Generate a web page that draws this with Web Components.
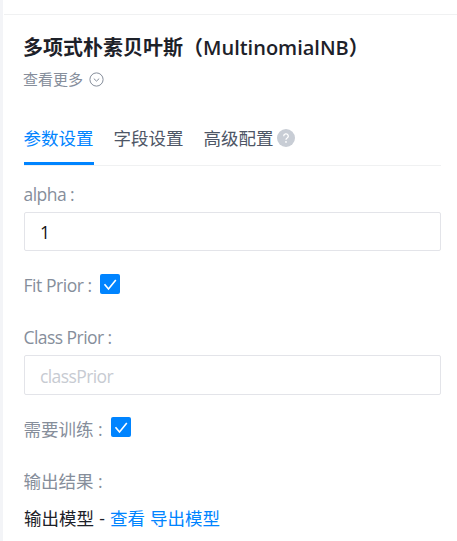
<!DOCTYPE html>
<html lang="zh-CN">
<head>
<meta charset="utf-8">
<title>多项式朴素贝叶斯</title>
<style>
  body {
    margin: 0;
    background: #fff;
    font-family: "Open Sans", "Noto Sans CJK SC", sans-serif;
    font-size: 17.5px;
    --primary: #0084ff;
    --muted: #868e9b;
    --dark: #1d2129;
    --border: #e3e4e9;
  }
</style>
</head>
<body>
<config-panel>
  <panel-title slot="head" more="查看更多">多项式朴素贝叶斯（MultinomialNB）</panel-title>
  <tab-bar slot="head">
    <tab-item active>参数设置</tab-item>
    <tab-item>字段设置</tab-item>
    <tab-item help>高级配置</tab-item>
  </tab-bar>
  <form-label style="height:46px;padding-top:20px;padding-bottom:8px;letter-spacing:-.55px">alpha :</form-label>
  <text-field value="1"></text-field>
  <form-label style="height:67px;letter-spacing:-.45px">Fit Prior :<check-box slot="control"></check-box></form-label>
  <form-label style="height:37px;letter-spacing:-.55px">Class Prior :</form-label>
  <text-field placeholder="classPrior" style="height:40px;letter-spacing:-.6px"></text-field>
  <form-label style="height:66px">需要训练 :<check-box slot="control"></check-box></form-label>
  <form-label style="height:38px">输出结果 :</form-label>
  <model-output name="输出模型"></model-output>
</config-panel>

<script>
class ConfigPanel extends HTMLElement {
  constructor() {
    super()
    this.attachShadow({ mode: 'open' }).innerHTML = `
      <style>
        :host {
          display: block;
          box-sizing: border-box;
          height: 541px;
          overflow: hidden;
          border-left: 3px solid #f3f4f7;
        }
        .top {
          height: 14px;
          margin-left: 1px;
          border-bottom: 1px solid #f0f1f2;
        }
        .content {
          padding: 0 16px 0 21px;
        }
      </style>
      <div class="top"></div>
      <div class="content">
        <slot name="head"></slot>
        <slot></slot>
      </div>
    `
  }
}
customElements.define('config-panel', ConfigPanel)

class PanelTitle extends HTMLElement {
  constructor() {
    super()
    this.attachShadow({ mode: 'open' })
    this.shadowRoot.innerHTML = `
      <style>
        :host {
          display: block;
          height: 98px;
          padding-top: 17px;
          box-sizing: border-box;
          color: var(--dark);
        }
        h3 {
          margin: 0 0 0 -1px;
          font-size: 20px;
          line-height: 32px;
          font-weight: 600;
          white-space: nowrap;
        }
        .more {
          display: flex;
          align-items: center;
          gap: 6px;
          height: 30px;
          margin-left: -1px;
          font-size: 15px;
          color: var(--muted);
        }
        .more span { margin-top: -2px; }
      </style>
      <h3><slot></slot></h3>
      <div class="more">
        <span>${this.getAttribute('more')}</span>
        <svg width="15" height="15" viewBox="0 0 15 15" fill="none" stroke="currentColor">
          <circle cx="7.5" cy="7.5" r="6.6"/>
          <path d="M4.8 6.6l2.7 2.5 2.7-2.5"/>
        </svg>
      </div>
    `
  }
}
customElements.define('panel-title', PanelTitle)

class TabBar extends HTMLElement {
  constructor() {
    super()
    this.attachShadow({ mode: 'open' }).innerHTML = `
      <style>
        :host {
          display: flex;
          gap: 20px;
          height: 53px;
          box-sizing: border-box;
          border-bottom: 1px solid #f0f1f2;
        }
      </style>
      <slot></slot>
    `
  }
}
customElements.define('tab-bar', TabBar)

class TabItem extends HTMLElement {
  constructor() {
    super()
    const help = this.hasAttribute('help') ? `
      <svg width="18" height="18" viewBox="0 0 18 18">
        <circle cx="9" cy="9" r="9" fill="#c8cdd5"/>
        <path d="M6.7 7.2a2.3 2.2 0 1 1 3.5 1.8c-.8.5-1.2.9-1.2 1.8" fill="none" stroke="#fff" stroke-width="1.3"/>
        <circle cx="9" cy="12.9" r=".9" fill="#fff"/>
      </svg>` : ''
    this.attachShadow({ mode: 'open' }).innerHTML = `
      <style>
        :host {
          display: flex;
          align-items: center;
          gap: 3px;
          height: 52px;
          box-sizing: border-box;
          padding-bottom: 1px;
          border-bottom: 3px solid transparent;
          color: #4e5666;
          white-space: nowrap;
        }
        :host([active]) {
          color: var(--primary);
          border-color: var(--primary);
        }
        span {
          margin-left: -.5px;
          margin-right: .5px;
        }
        svg { margin-top: 1px; }
      </style>
      <span><slot></slot></span>${help}
    `
  }
}
customElements.define('tab-item', TabItem)

class FormLabel extends HTMLElement {
  constructor() {
    super()
    this.attachShadow({ mode: 'open' }).innerHTML = `
      <style>
        :host {
          display: flex;
          align-items: center;
          gap: 8.5px;
          box-sizing: border-box;
          padding-top: 12px;
          padding-bottom: 10px;
          color: var(--muted);
          white-space: nowrap;
        }
        span {
          margin-top: -2px;
          margin-left: -.5px;
        }
      </style>
      <span><slot></slot></span>
      <slot name="control"></slot>
    `
  }
}
customElements.define('form-label', FormLabel)

class CheckBox extends HTMLElement {
  constructor() {
    super()
    this.attachShadow({ mode: 'open' }).innerHTML = `
      <style>
        :host {
          display: block;
          width: 20px;
          height: 20px;
          margin-top: -4px;
          border-radius: 2px;
          background: var(--primary);
        }
        svg { display: block; }
      </style>
      <svg width="20" height="20" viewBox="0 0 20 20">
        <path d="M4.5 10.2l4 4.8L15.8 6" fill="none" stroke="#fff" stroke-width="1.6"/>
      </svg>
    `
  }
}
customElements.define('check-box', CheckBox)

class TextField extends HTMLElement {
  constructor() {
    super()
    this.attachShadow({ mode: 'open' }).innerHTML = `
      <style>
        :host {
          display: block;
          height: 39px;
        }
        input {
          width: 100%;
          height: 100%;
          box-sizing: border-box;
          padding: 1px 15px 0;
          border: 1px solid var(--border);
          border-radius: 2px;
          outline: 0;
          background: #fff;
          color: #111;
          font: inherit;
          letter-spacing: inherit;
        }
        input::placeholder { color: #c7cbd2; }
      </style>
      <input type="text">
    `
    const input = this.shadowRoot.querySelector('input')
    input.value = this.getAttribute('value') || ''
    input.placeholder = this.getAttribute('placeholder') || ''
  }
}
customElements.define('text-field', TextField)

class ModelOutput extends HTMLElement {
  constructor() {
    super()
    this.attachShadow({ mode: 'open' }).innerHTML = `
      <style>
        :host {
          display: block;
          line-height: 38px;
          word-spacing: .6px;
          color: var(--dark);
          white-space: nowrap;
        }
        a {
          color: var(--primary);
          text-decoration: none;
        }
      </style>
      ${this.getAttribute('name')} - <a href="#">查看</a> <a href="#">导出模型</a>
    `
  }
}
customElements.define('model-output', ModelOutput)
</script>
</body>
</html>
